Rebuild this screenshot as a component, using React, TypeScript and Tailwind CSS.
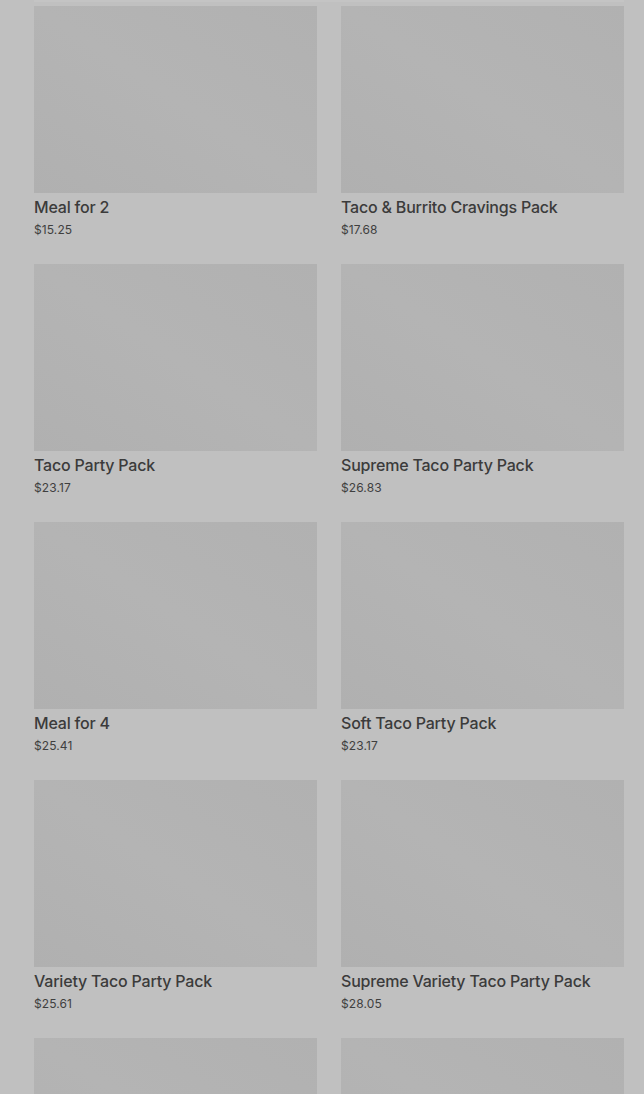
const items = [
  { name: 'Meal for 2', price: '$15.25' },
  { name: 'Taco & Burrito Cravings Pack', price: '$17.68' },
  { name: 'Taco Party Pack', price: '$23.17' },
  { name: 'Supreme Taco Party Pack', price: '$26.83' },
  { name: 'Meal for 4', price: '$25.41' },
  { name: 'Soft Taco Party Pack', price: '$23.17' },
  { name: 'Variety Taco Party Pack', price: '$25.61' },
  { name: 'Supreme Variety Taco Party Pack', price: '$28.05' },
  { name: '', price: '' },
  { name: '', price: '' },
];

function ProductCard({ name, price }: { name: string; price: string }) {
  return (
    <div className="flex flex-col">
      <div className="h-[187px] w-full bg-gradient-to-tr from-[#b0b0b0] via-[#b4b4b4] to-[#b1b1b1]" />
      {name && (
        <>
          <div className="mt-[4px] text-[16px] leading-[20px] font-medium text-[#3b3b3b] tracking-[-0.2px]">
            {name}
          </div>
          <div className="mt-[5px] text-[12px] leading-[16px] text-[#3f3f3f] tracking-[0.1px]">
            {price}
          </div>
        </>
      )}
    </div>
  );
}

export default function App() {
  return (
    <div
      className="h-[1094px] w-full overflow-hidden bg-[#c0c0c0]"
      style={{ fontFamily: 'Inter, "Liberation Sans", sans-serif' }}
    >
      <div className="ml-[34px] mr-[20px] h-[2px] bg-[#c4c4c4]" />
      <div className="grid grid-cols-2 gap-x-[24px] gap-y-[26px] pl-[34px] pr-[20px] pt-[4px]">
        {items.map((item, i) => (
          <ProductCard key={i} name={item.name} price={item.price} />
        ))}
      </div>
    </div>
  );
}
